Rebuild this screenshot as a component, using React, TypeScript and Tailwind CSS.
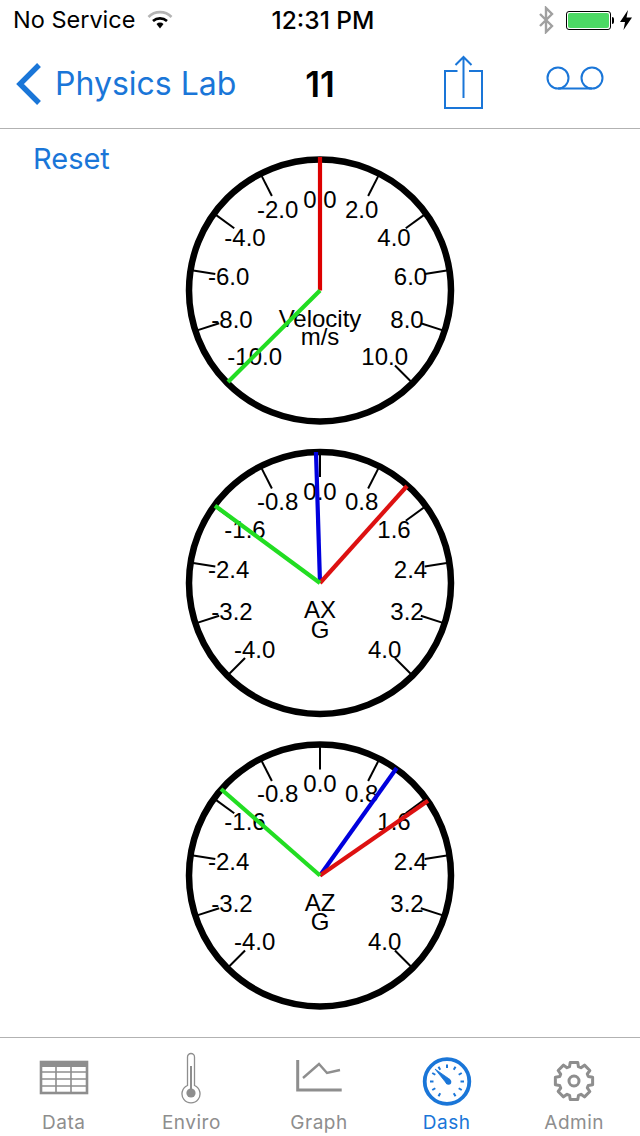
const UI = "font-['Inter','Liberation_Sans',sans-serif]";
const BLUE = '#1a76d8';
const GREY = '#8e8e8e';

type Label = { t: string; x: number; y: number };
type Needle = { c: string; x: number; y: number };

function Gauge({ cy, top, labels, title, unit, needles }: {
  cy: number; top: number; labels: Label[]; title: Label; unit: Label; needles: Needle[];
}) {
  const ticks = Array.from({ length: 11 }, (_, i) => -135 + i * 27);
  const toY = (y: number) => y - top;
  const cyL = toY(cy);
  return (
    <svg width={280} height={280} viewBox="0 0 280 280" className="block" style={{ fontFamily: "'Liberation Sans', Arial, sans-serif" }}>
      <circle cx={140} cy={cyL} r={131} fill="#fff" stroke="#000" strokeWidth={6.5} />
      {ticks.map((a) => {
        const r = (a * Math.PI) / 180;
        return (
          <line key={a} x1={140 + 130 * Math.sin(r)} y1={cyL - 130 * Math.cos(r)} x2={140 + 106 * Math.sin(r)} y2={cyL - 106 * Math.cos(r)} stroke="#000" strokeWidth={2} />
        );
      })}
      {[...labels, title, unit].map((l) => (
        <text key={l.t + l.x} x={l.x - 180} y={toY(l.y)} fontSize={24} textAnchor="middle" fill="#000">{l.t}</text>
      ))}
      {needles.map((n) => (
        <line key={n.c} x1={140} y1={cyL} x2={n.x - 180} y2={toY(n.y)} stroke={n.c} strokeWidth={4.2} />
      ))}
    </svg>
  );
}

const mk = (vals: string[], o: number): Label[] => {
  const xs = [320, 277.7, 361.7, 245, 394, 228.7, 410.5, 232, 407, 254.7, 384.7];
  const ys = [0, 10, 10, 38, 38, 77.5, 77.5, 120, 120, 157.5, 157.5];
  return vals.map((t, i) => ({ t, x: xs[i], y: o + ys[i] }));
};

const g1 = mk(['0.0', '-2.0', '2.0', '-4.0', '4.0', '-6.0', '6.0', '-8.0', '8.0', '-10.0', '10.0'], 207.5);
const gv = ['0.0', '-0.8', '0.8', '-1.6', '1.6', '-2.4', '2.4', '-3.2', '3.2', '-4.0', '4.0'];

function TabItem({ label, active, children }: { label: string; active?: boolean; children: React.ReactNode }) {
  return (
    <div className="flex-1 flex flex-col items-center">
      <div className="h-[60px] w-full flex items-start justify-center">{children}</div>
      <span className={`text-[19px] leading-[24px] tracking-[0.5px] ${active ? 'text-[#1a76d8]' : 'text-[#8e8e8e]'}`}>{label}</span>
    </div>
  );
}

function Gear() {
  const n = 8;
  const pts: string[] = [];
  for (let i = 0; i < n; i++) {
    const a = (i * 2 * Math.PI) / n;
    const at = (r: number, d: number) => {
      const b = a + d;
      return `${(30 + r * Math.sin(b)).toFixed(2)} ${(30 - r * Math.cos(b)).toFixed(2)}`;
    };
    pts.push(`${i === 0 ? 'M' : 'L'}${at(19, -0.2)}`, `L${at(19, 0.2)}`, `L${at(15, 0.3)}`, `L${at(15, 0.48)}`);
  }
  return (
    <svg width={60} height={60} viewBox="0 0 60 60">
      <path d={pts.join(' ') + 'Z'} fill="none" stroke={GREY} strokeWidth={3} strokeLinejoin="round" />
      <circle cx={30} cy={30} r={5} fill="none" stroke={GREY} strokeWidth={3} />
    </svg>
  );
}

function Dash() {
  const marks = [-120, -90, -60, -30, 0, 30, 60, 90, 120, 150, 210];
  return (
    <svg width={60} height={60} viewBox="0 0 60 60">
      <circle cx={30} cy={30.5} r={22.3} fill="none" stroke={BLUE} strokeWidth={3.8} />
      {marks.map((a) => {
        const r = (a * Math.PI) / 180;
        return <line key={a} x1={30 + 17 * Math.sin(r)} y1={30.5 - 17 * Math.cos(r)} x2={30 + 13.5 * Math.sin(r)} y2={30.5 - 13.5 * Math.cos(r)} stroke={BLUE} strokeWidth={2} />;
      })}
      <path d="M18 18 L33 28.5 L30 33 Z" fill={BLUE} stroke={BLUE} strokeWidth={0.8} strokeLinejoin="round" />
      <circle cx={31.5} cy={31} r={2.8} fill={BLUE} />
    </svg>
  );
}

export default function App() {
  return (
    <div className={`w-[640px] h-[1136px] bg-white flex flex-col overflow-hidden ${UI}`}>
      <div className="h-[40px] shrink-0 flex items-center pl-[13px] pr-[8px] text-black relative">
        <span className="text-[23.5px] leading-none">No Service</span>
        <svg width={26} height={20} viewBox="0 0 26 20" className="ml-[12px]">
          <path d="M1.5 7 A16 16 0 0 1 24.5 7" fill="none" stroke="#b4b4b4" strokeWidth={2.6} />
          <path d="M6 11 A10.5 10.5 0 0 1 20 11" fill="none" stroke="#000" strokeWidth={2.6} />
          <path d="M9.5 14 L13 18.5 L16.5 14 A5 5 0 0 0 9.5 14Z" fill="#000" />
        </svg>
        <span className="absolute left-0 right-0 pl-[6px] text-center text-[24.5px] leading-none font-medium">12:31 PM</span>
        <div className="ml-auto flex items-center">
          <svg width={16} height={28} viewBox="0 0 16 28" className="mr-[12px]">
            <path d="M2 8 L14 20 L8 26 L8 2 L14 8 L2 20" fill="none" stroke="#a0a0a0" strokeWidth={2.4} />
          </svg>
          <div className="w-[45px] h-[19px] border border-black rounded-[3px] p-[1px] bg-white">
            <div className="w-full h-full bg-[#4cd964] rounded-[2px]" />
          </div>
          <div className="w-[2px] h-[7px] bg-black rounded-r-[2px] ml-[1px]" />
          <svg width={12} height={20} viewBox="0 0 12 20" className="ml-[6px]">
            <path d="M8 0 L0 12 L5 12 L3.5 20 L12 7.5 L6.5 7.5 Z" fill="#000" />
          </svg>
        </div>
      </div>

      <div className="h-[89px] shrink-0 border-b border-[#b2b2b2] flex items-center relative">
        <svg width={30} height={46} viewBox="0 0 30 46" className="ml-[14px]">
          <path d="M25 4 L6 23 L25 42" fill="none" stroke={BLUE} strokeWidth={5.4} />
        </svg>
        <span className="ml-[11px] text-[32px] leading-none text-[#1a76d8]">Physics Lab</span>
        <span className="absolute left-0 right-0 text-center text-[35px] leading-none font-semibold text-black">11</span>
        <svg width={60} height={60} viewBox="0 0 60 60" className="absolute left-[433px] top-[10px]">
          <path d="M24.5 21 H12 V58 H49 V21 H36" fill="none" stroke={BLUE} strokeWidth={2} />
          <path d="M30.5 48 V8 M22.5 15 L30.5 7 L38.5 15" fill="none" stroke={BLUE} strokeWidth={2} />
        </svg>
        <svg width={64} height={32} viewBox="0 0 64 32" className="absolute left-[543px] top-[25px]">
          <circle cx={15} cy={13} r={10.5} fill="none" stroke={BLUE} strokeWidth={2} />
          <circle cx={49} cy={13} r={10.5} fill="none" stroke={BLUE} strokeWidth={2} />
          <path d="M15 23.5 H49" stroke={BLUE} strokeWidth={2} />
        </svg>
      </div>

      <div className="flex-1 relative">
        <span className="absolute left-[33px] top-[12px] text-[29px] leading-[36px] text-[#1a76d8]">Reset</span>
        <div className="flex flex-col items-center pt-[21px]">
          <Gauge cy={290.5} top={150} labels={g1}
            title={{ t: 'Velocity', x: 320, y: 326.7 }} unit={{ t: 'm/s', x: 320, y: 344.5 }}
            needles={[{ c: '#dd0000', x: 320, y: 157 }, { c: '#22dd22', x: 228, y: 382 }]} />
        </div>
        <div className="flex flex-col items-center mt-[10px]">
          <Gauge cy={583} top={440} labels={mk(gv, 500)}
            title={{ t: 'AX', x: 320, y: 618 }} unit={{ t: 'G', x: 320, y: 638 }}
            needles={[{ c: '#0000dd', x: 316, y: 452 }, { c: '#dd1111', x: 407, y: 486 }, { c: '#22dd22', x: 215, y: 505.7 }]} />
        </div>
        <div className="flex flex-col items-center mt-[15px]">
          <Gauge cy={875.5} top={735} labels={mk(gv, 792)}
            title={{ t: 'AZ', x: 320, y: 910.7 }} unit={{ t: 'G', x: 320, y: 930 }}
            needles={[{ c: '#0000dd', x: 396.7, y: 768 }, { c: '#dd1111', x: 428, y: 800.7 }, { c: '#22dd22', x: 221, y: 789 }]} />
        </div>
      </div>

      <div className="h-[99px] shrink-0 border-t border-[#b2b2b2] flex pr-[2px] pt-[13px]">
        <TabItem label="Data">
          <svg width={50} height={36} viewBox="0 0 50 36" className="mt-[9px]">
            <rect x={2} y={2} width={46} height={31} fill="none" stroke={GREY} strokeWidth={2.6} />
            <path d="M2 5 H48" stroke={GREY} strokeWidth={4} />
            <path d="M2 12 H48 M2 19 H48 M2 26 H48 M17 4 V33 M32 4 V33" stroke={GREY} strokeWidth={1.6} />
          </svg>
        </TabItem>
        <TabItem label="Enviro">
          <svg width={20} height={52} viewBox="0 0 20 52" className="mt-[1px]">
            <path d="M6.5 32.5 V4 A3.5 3.5 0 0 1 13.5 4 V32.5 A9 9 0 1 1 6.5 32.5 Z" fill="none" stroke={GREY} strokeWidth={1.3} transform="translate(0 1)" />
            <path d="M10 14 V38" stroke={GREY} strokeWidth={2} />
            <circle cx={10} cy={41} r={4.6} fill={GREY} />
          </svg>
        </TabItem>
        <TabItem label="Graph">
          <svg width={50} height={36} viewBox="0 0 50 36" className="mt-[9px]">
            <path d="M3.7 0 V30 H47.7" fill="none" stroke={GREY} strokeWidth={3} />
            <path d="M9 18 L25 4 L33 13 L46 10" fill="none" stroke={GREY} strokeWidth={2.4} />
          </svg>
        </TabItem>
        <TabItem label="Dash" active><Dash /></TabItem>
        <TabItem label="Admin"><Gear /></TabItem>
      </div>
    </div>
  );
}
